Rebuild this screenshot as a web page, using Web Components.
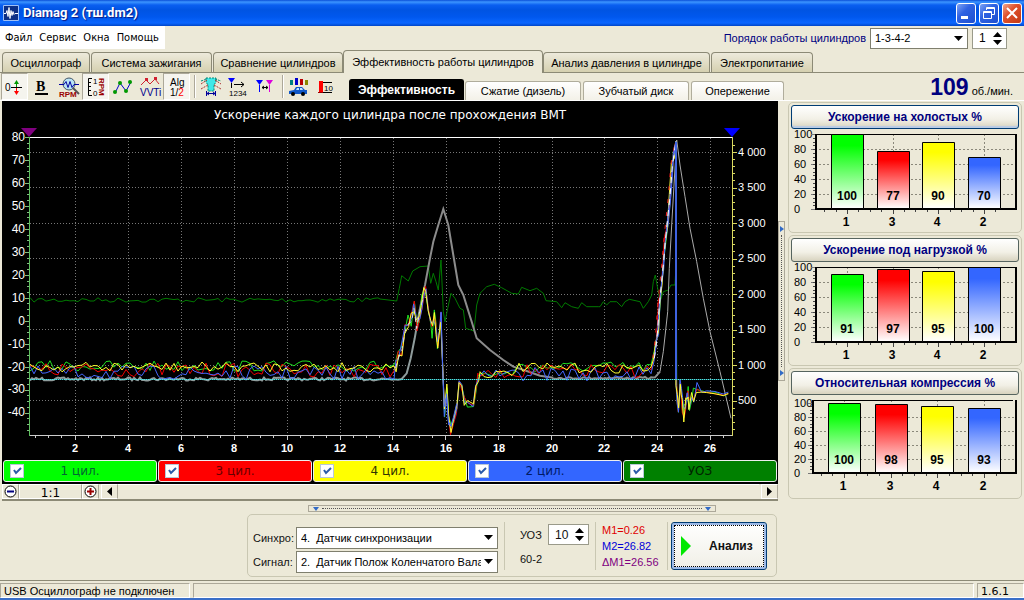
<!DOCTYPE html>
<html lang="ru">
<head>
<meta charset="utf-8">
<title>Diamag 2</title>
<style>
html,body{margin:0;height:100%}
body{font:11px/16px "Liberation Sans",Arial,sans-serif;color:#000;background:#ece9d8}
</style>
</head>
<body>
<dm-app></dm-app>
<script>
const define=(name,html,init)=>customElements.define(name,class extends HTMLElement{
  connectedCallback(){
    if(this.shadowRoot)return;
    const root=this.attachShadow({mode:'open'});
    root.innerHTML='<style>*{box-sizing:border-box}button,input,select{font:inherit;color:inherit;margin:0}</style>'+(typeof html==='function'?html(this):html);
    if(init)init(this,root);
  }
});

/* Title bar */
define('dm-titlebar',`<style>
:host{display:flex;align-items:center;height:26px;padding:0 2px 0 3px;gap:4px;color:#fff;
 background:linear-gradient(#0a4fd8 0,#3c95ff 2px,#0a5ff0 5px,#0054e3 10px,#0058ee 17px,#0a66ff 23px,#0046c8 26px)}
h1{flex:1;margin:0;font:bold 13px/20px Roboto,sans-serif;text-shadow:1px 1px 1px #0a1883}
button{width:20px;height:21px;padding:0;border:1px solid #fff;border-radius:3px;background:linear-gradient(135deg,#7fa4f5,#2f62e2 40%,#1d4fd0);display:flex;align-items:center;justify-content:center}
button.close{background:linear-gradient(135deg,#f0a58c,#e0512c 40%,#c23a14)}
nav{display:flex;gap:3px}
</style>
<svg width="16" height="16" viewBox="0 0 16 16"><path fill="#0c2f86" stroke="#9fc0f5" d="M.5.5h15v15H.5z"/><path fill="none" stroke="#fff" d="M1 8.500h2l1-3 1 6 1-9 1 11 1-8 1 5 1-4 1 3 1-1h3"/></svg>
<h1>Diamag 2 (тш.dm2)</h1>
<nav>
<button aria-label="Свернуть"><svg width="14" height="14"><path fill="#fff" d="M2 10h7v3H2z"/></svg></button>
<button aria-label="Восстановить"><svg width="14" height="14" fill="none" stroke="#fff"><path d="M4.500 4V1.500h8v7H10M4.500 2.500h8M1.500 5.500h8v7h-8zM1.500 6.500h8"/></svg></button>
<button class="close" aria-label="Закрыть"><svg width="14" height="14"><path stroke="#fff" stroke-width="2" d="M2 2l10 10M12 2L2 12"/></svg></button>
</nav>`);

/* Drop-down; the chosen option is passed through the "value" attribute */
define('dm-select',el=>`<style>
:host{display:block}
span{display:grid;align-items:center;height:100%}
select,svg{grid-area:1/1}
select{appearance:none;width:100%;height:100%;border:1px solid #7f7f6e;border-radius:0;background:#fff;padding:0 16px 0 4px;outline:0;white-space:pre}
svg{justify-self:end;margin-right:5px;pointer-events:none}
</style><span><select aria-label="${el.getAttribute('label')}"><option>${el.getAttribute('value')}</option></select><svg width="9" height="5"><path d="M0 0h9L4.500 5z"/></svg></span>`);

define('dm-spin',el=>`<style>
:host{display:flex;border:1px solid #9a9a8a;background:#fff;font-size:12px}
input{flex:1;min-width:0;border:0;padding:0 0 0 6px;background:none;outline:0}
div{display:flex;flex-direction:column;justify-content:center;gap:3px;padding-right:4px}
button{border:0;padding:0;background:none;display:flex}
</style><input aria-label="${el.getAttribute('label')}" value="${el.getAttribute('value')}">
<div><button aria-label="Больше"><svg width="9" height="5"><path d="M0 5h9L4.500 0z"/></svg></button><button aria-label="Меньше"><svg width="9" height="5"><path d="M0 0h9L4.500 5z"/></svg></button></div>`);

/* Menu bar with firing order fields */
define('dm-menubar',`<style>
:host{display:flex;height:24px;justify-content:space-between}
nav{display:flex;align-items:center;gap:7px;height:23px;padding:0 6px 0 5px;background:#fff;font:11px/16px "DejaVu Sans Condensed","DejaVu Sans",sans-serif}
a{color:#000;text-decoration:none}
form{display:flex;align-items:center;gap:4px;margin-right:17px;color:#00007f}
dm-select{width:98px;height:21px;color:#000}
dm-spin{width:35px;height:21px;color:#000}
</style><nav><a href="#">Файл</a><a href="#">Сервис</a><a href="#">Окна</a><a href="#">Помощь</a></nav>
<form><span>Порядок работы цилиндров</span><dm-select label="Порядок работы цилиндров" value="1-3-4-2"></dm-select><dm-spin label="Номер цилиндра" value="1"></dm-spin></form>`);

/* Page tabs */
define('dm-tabs',`<style>
:host{display:flex;align-items:flex-end;height:23px;padding-left:2px;border-bottom:1px solid #8c8a76}
button{height:20px;padding:0;border:1px solid #8c8a76;border-bottom:0;border-radius:4px 4px 0 0;background:linear-gradient(#edeadb,#d5d0b0);margin-right:1px;white-space:nowrap;line-height:18px}
button[aria-selected=true]{height:23px;background:#ece9d8;margin:0 0 -1px -1px}
</style><button role="tab" style="width:88px">Осциллограф</button><button role="tab" style="width:121px">Система зажигания</button><button role="tab" style="width:130px">Сравнение цилиндров</button><button role="tab" aria-selected="true" style="width:200px">Эффективность работы цилиндров</button><button role="tab" style="width:167px">Анализ давления в цилиндре</button><button role="tab" style="width:102px">Электропитание</button>`);

/* Tool button: the picture is slotted */
define('dm-tool',el=>`<style>
:host{display:block;width:27px;height:27px}
button{width:100%;height:100%;padding:0;border:1px solid transparent;background:none;display:flex;align-items:center;justify-content:center}
:host([pressed]) button{border-color:#aca899 #fff #fff #aca899;background:#f5f4ee}
</style><button aria-label="${el.getAttribute('label')}" aria-pressed="${el.hasAttribute('pressed')}"><slot></slot></button>`);

define('dm-toolbar',`<style>
:host{display:flex;height:28px;align-items:flex-end;border-bottom:1px solid #fff}
.tools{display:flex;align-self:center;padding-left:1px}
i{width:2px;margin:2px 1px 2px 4px;border-left:1px solid #aca899;border-right:1px solid #fff}
svg{display:block;overflow:visible}
text{font:9px "Liberation Sans",sans-serif}
.sub{display:flex;align-items:flex-end;margin-left:10px;gap:2px}
.sub button{height:19px;padding:0;border:1px solid #b0ad9c;border-bottom:0;border-radius:3px 3px 0 0;background:linear-gradient(#fff,#f3f1e8)}
.sub button[aria-selected=true]{height:21px;background:#000;border-color:#000;color:#fff;font-weight:bold;font-size:12px;margin-right:-1px}
output{flex:1;display:flex;justify-content:flex-end;align-items:baseline;gap:3px;margin-right:11px;align-self:center}
output b{font-size:23px;line-height:26px;color:#00007f}
</style>
<div class="tools">
<dm-tool pressed label="Ноль"><svg width="20" height="20"><text x="0" y="14" style="font-size:10px">0</text><path stroke="#000" d="M6 10.500h11"/><path fill="#090" d="M9 7h5l-2.500-4zM11 7h1v3h-1z"/><path fill="#f00" d="M9 14h5l-2.500 4zM11 11h1v3h-1z"/></svg></dm-tool>
<dm-tool label="Жирные линии"><svg width="20" height="20"><text x="4" y="14" style="font:bold 14px 'Liberation Serif',serif">B</text><path stroke="#000" stroke-width="2" d="M3 17h13"/></svg></dm-tool>
<dm-tool label="RPM"><svg width="20" height="20"><circle cx="10" cy="7" r="6" fill="#b9e4f5" stroke="#456"/><path d="M14 11l6 6" stroke="#555" stroke-width="2"/><path fill="none" stroke="#0000a0" d="M0 7.500h5l2-3 2 6 2-6 2 6 2-3h5"/><text x="0" y="20" style="font:bold 8px 'Liberation Sans'" fill="#900">RPM</text></svg></dm-tool>
<dm-tool pressed label="Шкала оборотов"><svg width="20" height="20"><path fill="none" stroke="#000" d="M6 1.500H2.500v17H6M2 5.500h3M2 9.500h3M2 13.500h3"/><text x="7" y="7" style="font-size:8px">1</text><text x="7" y="19" style="font-size:8px">0</text><text transform="translate(13 1) rotate(90)" style="font:bold 8px 'Liberation Sans'" fill="#900">RPM</text></svg></dm-tool>
<dm-tool label="Точки"><svg width="20" height="20"><path fill="none" stroke="#00c" d="M2 16L7 6l6 8 5-9"/><g fill="#090"><circle cx="2" cy="15" r="2"/><circle cx="7" cy="6" r="2"/><circle cx="13" cy="14" r="2"/><circle cx="17" cy="5" r="2"/></g></svg></dm-tool>
<dm-tool label="VVTi"><svg width="20" height="20"><path fill="none" stroke="#d02030" d="M1 8l5-5 4 4 5-5 4 5"/><path fill="#d02030" d="M5 1h3v3H5zM14 0h3v3h-3z"/><text x="0" y="19" style="font-size:10px" fill="#00008b">VVTi</text></svg></dm-tool>
<dm-tool pressed label="Алгоритм"><svg width="20" height="20"><text x="3" y="9" style="font-size:10px">Alg</text><text x="3" y="19" style="font-size:10px">1/<tspan fill="#f00">2</tspan></text></svg></dm-tool>
<i></i>
<dm-tool label="Интервал"><svg width="20" height="20"><path fill="#40e8e8" stroke="#087" stroke-dasharray="2 1" d="M5 1h10v4l-2 3v6H7V8L5 5z"/><path fill="none" stroke="#a33" stroke-dasharray="2 1" d="M0 7l6-4M14 3l6 4M0 12l7-4M13 8l7 4"/><path fill="none" stroke="#087" stroke-dasharray="2 1" d="M0 4l6-2M14 2l6 2"/><path fill="none" stroke="#009" d="M5.500 14v5M14.500 14v5M6 16.500h8M8 15l-2 1.500L8 18M12 15l2 1.500-2 1.500"/></svg></dm-tool>
<dm-tool label="Метки 1234"><svg width="20" height="20"><path fill="#00f" d="M0 1h7L3.500 6z"/><path fill="none" stroke="#000" d="M3.500 6v5M6 7.500h10M13 5l3 2.500-3 2.500"/><text x="1" y="19" style="font-size:8px">1234</text></svg></dm-tool>
<dm-tool label="Маркеры"><svg width="20" height="20"><path fill="#00f" d="M1 3h7L4.500 8z"/><path fill="#d0d" d="M11 3h7l-3.500 5z"/><path fill="none" stroke="#00f" d="M4.500 8v7"/><path fill="none" stroke="#d0d" d="M14.500 8v7"/><path fill="none" stroke="#000" d="M7 10.500h6M9 9l-2 1.500L9 12M11 9l2 1.500-2 1.500"/></svg></dm-tool>
<i></i>
<dm-tool label="Автомобиль"><svg width="20" height="20"><path fill="#008080" d="M1 3h3v5H1z"/><path fill="#00c" d="M6 1h3v7H6z"/><path fill="#b00" d="M11 2h3v6h-3z"/><path fill="#880" d="M16 3h3v5h-3z"/><path fill="#1158c8" d="M0 14l5-1 2-3h6l3 3h2v4H0z"/><path fill="#bfe4ff" d="M7 13l1-2h2v2zM11 11h2l1 2h-3z"/><circle cx="4" cy="17" r="2"/><circle cx="14" cy="17" r="2"/></svg></dm-tool>
<dm-tool label="Столбцы"><svg width="20" height="20"><path fill="#f00" d="M3 4h4v11H3z"/><path stroke="#900" d="M2 15.500h5"/><text x="8" y="14" style="font-size:8px">10</text><path stroke="#000" d="M7 5.500h9M7 15.500h9"/></svg></dm-tool>
</div>
<div class="sub"><button role="tab" aria-selected="true" style="width:115px">Эффективность</button><button role="tab" style="width:116px">Сжатие (дизель)</button><button role="tab" style="width:106px">Зубчатый диск</button><button role="tab" style="width:93px">Опережение</button></div>
<output><b>109</b><span>об./мин.</span></output>`);

/* Oscillogram */
define('dm-chart',`<style>
:host{display:block;background:#000}
svg{display:block;width:100%;height:auto}
text{fill:#fff;font:bold 11px "Liberation Sans",sans-serif}
.l text{font-weight:normal;font-size:12px;text-anchor:end}
.b text{text-anchor:middle}
.r text{font-weight:normal}
text.t{font:12px "DejaVu Sans",sans-serif;text-anchor:middle}
</style><svg viewBox="2 101 776 359" role="img" aria-label="Ускорение каждого цилиндра"></svg>`,(el,root)=>{
  let seed=7;
  const rnd=()=>(seed=(seed*16807)%2147483647)/2147483647-.5;
  const noise=(x0,x1,step,y,amp)=>{const p=[];for(let x=x0;x<x1;x+=step)p.push([x,y+rnd()*amp]);return p};
  const line=(p,c,w=1,extra='')=>`<polyline fill="none" stroke="${c}" stroke-width="${w}" ${extra} points="${p.map(q=>q[0].toFixed(1)+','+q[1].toFixed(1)).join(' ')}"/>`;
  const at=(ox,list)=>list.map(q=>[ox+q[0]/3,125+q[1]/3]);
  let s='<text class="t" x="390" y="119">Ускорение каждого цилиндра после прохождения ВМТ</text>';
  const xs=[75,128,181,234,287,340,393,446,499,552,604,657,710],ys=[152,187,223,258,294,329,365,400];
  s+='<g stroke="#777" stroke-dasharray="1 2">'+xs.map(x=>`<path d="M${x+.5} 138v298"/>`).join('')+ys.map(y=>`<path d="M30 ${y+.5}h702"/>`).join('')+'</g>';
  s+='<g class="l">';
  for(let i=0;i<13;i++)s+=`<text x="25" y="${Math.round(141+i*22.95)}">${80-i*10}</text>`;
  s+='</g><g class="r">'+ys.map((y,i)=>{const v=4000-i*500;return `<text x="738" y="${y+4}">${v>=1000?Math.floor(v/1000)+' '+String(v%1000).padStart(3,'0'):v}</text>`}).join('')+'</g>';
  s+='<g class="b">'+xs.map((x,i)=>`<text x="${x}" y="452">${2+i*2}</text>`).join('')+'</g>';
  s+='<path stroke="#fff" d="M29 137.500h704"/><path stroke="#ccc" d="M29 435.500h704"/><path stroke="#5fbf5f" d="M29.500 137v299"/><path stroke="#d8d860" d="M732.500 137v299"/>';
  let d='';for(let i=0;i<52;i++)d+=`M${i%4?27:25} ${Math.round(137+i*5.74)+.5}h${i%4?2:4}`;
  s+=`<path stroke="#7fbf7f" d="${d}"/>`;
  d='';for(let i=-1;i<40;i++)d+=`M733 ${Math.round(152+i*7.1)+.5}h${i%5?2:4}`;
  s+=`<path stroke="#d8d860" d="${d}"/>`;
  d='';for(let i=0;i<53;i++)d+=`M${Math.round(35+i*13.24)+.5} 436v${i%4==3?4:2}`;
  s+=`<path stroke="#ccc" d="${d}"/>`;
  s+='<path fill="#800080" d="M21 128h16l-8 9z"/><path fill="#00f" d="M724 128h16l-8 9z"/>';
  s+=line([...noise(30,380,4,300,5),...at(380,[[0,522],[50,528],[58,490],[65,452],[85,468],[98,438],[120,425],[145,423],[152,475],[160,445],[168,470],[175,495],[183,405],[190,560],[195,590],[203,550],[213,505],[225,520],[240,550],[250,555],[257,610],[282,618],[290,540],[300,505],[320,485],[343,478],[365,488],[395,505],[415,507],[425,487],[450,497],[470,490],[490,505],[498,527],[530,530],[545,548],[555,533],[575,545],[595,550],[605,533],[620,545],[655,545]]),...at(600,[[0,545],[10,530],[20,540],[30,530],[50,530],[65,545],[75,530],[88,523],[120,530],[130,550],[145,530],[155,510],[160,470],[166,450],[180,530],[190,500],[205,495],[213,480],[225,480],[228,420]])],'#007a00');
  s+=line([...noise(30,400,2,379,3),...at(380,[[65,762],[80,745],[92,700],[104,640],[118,560]])],'#8f9c9c',2);
  s+=line(at(380,[[118,560],[135,480],[150,400],[160,350],[175,300],[190,252],[205,300],[220,390],[235,480],[250,510],[275,590],[290,640],[330,675],[370,705],[400,725],[440,738],[480,752],[520,758]]),'#8c8c8c',2);
  s+=line([...noise(553,655,2,378,2),...at(600,[[165,757],[180,740]])],'#8c8c8c',2);
  s+=line(at(600,[[180,740],[190,680],[203,560],[208,430],[215,300],[222,180],[230,45],[240,120],[255,215],[270,310],[290,410],[310,520],[330,620],[360,740],[393,880]]),'#aaa');
  const rise=[[47,730],[55,705],[65,675],[75,615],[85,595],[95,585],[102,555],[110,605],[118,570],[125,535],[131,515],[137,512],[145,565],[152,585],[157,620],[162,565],[168,605],[173,650],[178,605],[183,575],[188,730],[193,850],[200,800],[205,880],[212,912],[220,880],[230,850],[237,760],[245,790],[253,830],[262,835],[280,832],[287,790],[295,752]];
  const peak=[[163,700],[168,665],[173,615],[178,540],[184,480],[190,420],[196,350],[202,290],[210,215],[217,125],[222,88],[228,48],[229,760],[232,820],[236,860],[240,790],[244,815],[248,840],[252,865],[256,840],[260,820],[264,810],[268,830],[274,815],[280,805],[290,790]];
  const tail=[[305,802],[320,800],[345,803],[370,808],[385,806]];
  const jitter=(list,a,dx=0)=>list.map(q=>[q[0]+rnd()*dx,q[1]+rnd()*a]);
  for(const [c,y,a] of [['#20e020',366,11],['#f00000',370,14],['#4468ff',373,14],['#ffff30',367,10]]){
    s+=line([...noise(30,396,4,y,a),...at(380,jitter(rise.slice(0,24),56,3)),...at(380,jitter(rise.slice(24),36,3)),...noise(480,515,4,374,8),...noise(515,652,4,y+1,a),...at(600,jitter(peak.slice(0,11),40,6)),...at(600,peak.slice(11,12)),...at(600,jitter(peak.slice(12),56,3)),...at(600,jitter(tail,10))],c);
  }
  s+=line(at(380,jitter(rise.slice(0,12),12)),'#ddd',1,'stroke-dasharray="5 4"')+line(at(600,peak.slice(0,12)),'#4a6cff')+line(at(600,peak.slice(0,12)),'#fff',1,'stroke-dasharray="6 5"')+line(at(600,peak.slice(0,11).map(q=>[q[0]-5,q[1]])),'#f02020',1,'stroke-dasharray="4 9"');
  s+=line(at(380,jitter(rise.slice(19,27),30)),'#4a6cff')+line([[676,142],[676,379]],'#3f63e0',2);
  s+='<path stroke="#5ff0e8" stroke-dasharray="1 1" d="M30 379.500h702"/><path stroke="#3fd8e0" stroke-opacity=".45" d="M30 379.500h702"/>';
  root.querySelector('svg').innerHTML=s;
});

/* Channel switch under the chart */
define('dm-channel',el=>`<style>
:host{display:block;flex:1;min-width:0}
label{display:grid;grid-template-columns:14px 1fr 14px;align-items:center;height:22px;padding:0 7px;border:1px solid #eee;border-radius:3px;background:${el.getAttribute('color')};font:12px/20px "DejaVu Sans",sans-serif;color:${el.getAttribute('ink')}}
input{appearance:none;width:12px;height:12px;background:#fff;grid-area:1/1;outline:1px solid #b8c8d8}
svg{grid-area:1/1;pointer-events:none}
span{text-align:center;grid-area:1/2}
</style><label><input type="checkbox" checked><svg width="12" height="12"><path fill="none" stroke="#2a5aa8" stroke-width="2" d="M3 5l2 3 5-5"/></svg><span><slot></slot></span></label>`);

define('dm-scroll',`<style>
:host{display:flex;height:17px;border-bottom:2px solid #8c8a76;background:#ece9d8}
button,output{border:1px solid;border-color:#fff #aca899 #fff #fff;padding:0;background:#ece9d8;display:flex;align-items:center;justify-content:center}
.z{width:17px}
output{width:63px;padding-top:3px;font:12px/13px "DejaVu Sans",sans-serif}
.a{width:17px;margin-left:2px}
div{flex:1;border-top:1px solid #fff;background:#ece9d8}
</style>
<button class="z" aria-label="Уменьшить"><svg width="13" height="13"><circle cx="6.500" cy="6.500" r="5.500" fill="#fff" stroke="#000"/><path stroke="#00007f" stroke-width="2" d="M3 6.500h7"/></svg></button>
<output>1:1</output>
<button class="z" aria-label="Увеличить"><svg width="13" height="13"><circle cx="6.500" cy="6.500" r="5.500" fill="#fff" stroke="#000"/><path stroke="#900" stroke-width="2" d="M3 6.500h7M6.500 3v7"/></svg></button>
<button class="a" aria-label="Влево"><svg width="5" height="9"><path d="M5 0v9L0 4.500z"/></svg></button><div></div><button class="a" aria-label="Вправо"><svg width="5" height="9"><path d="M0 0v9l5-4.500z"/></svg></button>`);

/* Gradient bar chart with a header button */
define('dm-bars',`<style>
:host{display:block;border:1px solid #c9c7b2;border-radius:5px;padding:2px;height:131px}
button{display:block;width:100%;height:24px;padding:0;border:1px solid #56645f;border-radius:3px;background:linear-gradient(#fff,#f2f0e6 60%,#d8d3bf);color:#00007f;font-weight:bold;font-size:12px}
:host([active]) button{border-color:#003c74;box-shadow:inset 0 -2px 1px #b8cbe6}
svg{display:block;width:100%;height:auto}
text{font:11px "Liberation Sans",sans-serif}
.v text{font:bold 12px "Liberation Sans",sans-serif;text-anchor:middle}
</style><button><slot></slot></button><svg viewBox="0 0 228 101"></svg>`,(el,root)=>{
  const max=+el.getAttribute('max'),left=+el.getAttribute('left');
  const bars=el.getAttribute('values').split(',').map(Number);
  const cols=['#00ff00','#ff0000','#ffff00','#3366ff'],names=['1','3','4','2'];
  const x0=+el.getAttribute('start'),step=(177-x0)/3;
  const top=5,bot=+el.getAttribute('bottom'),h=bot-top,Y=v=>Math.round(bot-v*h/max);
  let s='<defs>'+cols.map((c,i)=>`<linearGradient id="g${i}" x1="0" y1="0" x2="0" y2="1"><stop offset=".15" stop-color="${c}"/><stop offset="1" stop-color="#fff"/></linearGradient>`).join('')+'</defs><g stroke="#8a887a" stroke-dasharray="2 2">';
  for(let v=20;v<=80;v+=20)s+=`<path d="M${left} ${Y(v)+.5}H225"/>`;
  bars.forEach((b,i)=>{s+=`<path d="M${Math.round(x0+i*step)+16.5} ${top}V${bot}"/>`});
  s+='</g>';
  for(let v=0;v<=100;v+=20)s+=`<text x="3" y="${Y(v)+4}">${v}</text><path stroke="#777" d="M${left-4} ${Y(v)+.5}h4"/>`;
  let d='';for(let v=5;v<100;v+=5)d+=`M${left-2} ${Y(v)+.5}h2`;
  bars.forEach((b,i)=>{for(let k=-2;k<2;k++)d+=`M${Math.round(x0+i*step+16+k*step/4)+.5} ${bot+1}v${k?2:4}`});
  s+=`<path stroke="#444" d="${d}"/><path fill="none" stroke="#000" d="M${left} ${top+.5}h201"/><path fill="none" stroke="#000" stroke-width="2" d="M${left+1} ${top}V${bot}M225 ${top}v${h}M${left} ${bot}H226"/><g class="v">`;
  bars.forEach((b,i)=>{const x=Math.round(x0+i*step);s+=`<path fill="url(#g${i})" stroke="#000" d="M${x+.5} ${Y(b)+.5}h32V${bot-.5}h-32z"/><text x="${x+16}" y="${bot-9}">${b}</text><text x="${x+15}" y="${bot+17}">${names[i]}</text>`});
  root.querySelector('svg').innerHTML=s+'</g>';
});

/* Collapsible splitter handles */
define('dm-split',el=>el.hasAttribute('vertical')?`<style>
:host{display:flex;align-items:center}
div{width:7px;height:160px;border:1px solid #aca899;display:flex;flex-direction:column;align-items:center;justify-content:space-between;padding:4px 0}
i{flex:1;margin:3px 0;border-left:1px dotted #555}
</style><div><svg width="4" height="6"><path fill="#316ac5" d="M0 0v6l4-3z"/></svg><i></i><svg width="4" height="6"><path fill="#316ac5" d="M0 0v6l4-3z"/></svg></div>`:`<style>
:host{display:flex;width:408px;height:7px;border:1px solid #aca899;align-items:center;padding:0 4px}
i{flex:1;margin:0 3px;border-top:1px dotted #555}
</style><svg width="6" height="4"><path fill="#316ac5" d="M0 0h6L3 4z"/></svg><i></i><svg width="6" height="4"><path fill="#316ac5" d="M0 0h6L3 4z"/></svg>`);

define('dm-controls',`<style>
:host{display:flex;align-items:center;width:530px;height:63px;border:1px solid #c9c7b2;border-radius:5px;padding:0 9px 0 5px;color:#111}
.src{display:grid;grid-template-columns:40px 202px;gap:2px 3px;align-items:center;padding-top:8px}
.src dm-select{height:22px;color:#000}
hr{width:1px;height:48px;border:0;margin:0 6px;background:#c9c7b2}
.adv{display:grid;grid-template-columns:28px 41px;gap:6px 0;align-items:center;margin-left:9px}
.adv dm-spin{height:21px}
ul{list-style:none;margin:0;padding:0;width:60px;white-space:nowrap}
button{width:97px;height:48px;display:flex;align-items:center;gap:18px;padding:0 9px;border:1px solid #003c74;border-radius:3px;background:linear-gradient(#fff,#f0efe6);font-weight:bold;font-size:12px;box-shadow:inset 0 0 0 2px #9ebbe8;outline:1px dotted #000;outline-offset:-4px;margin-left:-3px}
</style>
<div class="src"><span>Синхро:</span><dm-select label="Синхро" value="4.&nbsp; Датчик синхронизации"></dm-select><span>Сигнал:</span><dm-select label="Сигнал" value="2.&nbsp; Датчик Полож Коленчатого Вала"></dm-select></div>
<hr><div class="adv"><span>УОЗ</span><dm-spin label="УОЗ" value="10"></dm-spin><span>60-2</span></div><hr>
<ul><li style="color:#e00000">M1=0.26</li><li style="color:#0000d8">M2=26.82</li><li style="color:#800080">ΔM1=26.56</li></ul><hr>
<button><svg width="10" height="20"><path fill="#00e800" d="M0 0l10 10L0 20z"/></svg>Анализ</button>`);

define('dm-status',`<style>
:host{display:flex;height:20px;gap:3px;border-top:1px solid #8c8a76;border-bottom:2px solid #3a6fc8;padding:2px 0 0 0}
span{border:1px solid;border-color:#aca899 #fff #fff #aca899;padding:0 3px;line-height:15px;white-space:nowrap}
</style><span style="width:190px">USB Осциллограф не подключен</span><span style="flex:1"></span><span style="width:47px;font:11px/15px 'DejaVu Sans',sans-serif">1.6.1</span>`);

define('dm-app',`<style>
:host{display:flex;flex-direction:column;min-height:100vh;background:#ece9d8}
main{display:grid;grid-template-columns:minmax(0,1fr) 9px 236px;padding:0 1px 0 2px}
.legend{display:flex;gap:1px;background:#000;padding:0 1px 2px}
aside{display:flex;flex-direction:column;gap:2px;padding:1px 1px 0 1px}
footer{flex:1;display:flex;flex-direction:column;align-items:center;gap:2px;padding-top:4px}
</style>
<dm-titlebar></dm-titlebar><dm-menubar></dm-menubar><dm-tabs></dm-tabs><dm-toolbar></dm-toolbar>
<main><section><dm-chart></dm-chart>
<div class="legend"><dm-channel color="#00ff00" ink="#063">1 цил.</dm-channel><dm-channel color="#ff0000" ink="#600">3 цил.</dm-channel><dm-channel color="#ffff00" ink="#330">4 цил.</dm-channel><dm-channel color="#3366ff" ink="#001a66">2 цил.</dm-channel><dm-channel color="#008000" ink="#020">УОЗ</dm-channel></div>
<dm-scroll></dm-scroll></section>
<dm-split vertical></dm-split>
<aside><dm-bars active max="100" left="24" start="40" bottom="80" values="100,77,90,70">Ускорение на холостых %</dm-bars>
<dm-bars max="100" left="24" start="40" bottom="80" values="91,97,95,100">Ускорение под нагрузкой %</dm-bars>
<dm-bars max="104" left="21" start="37" bottom="78" values="100,98,95,93">Относительная компрессия %</dm-bars></aside></main>
<footer><dm-split></dm-split><dm-controls></dm-controls></footer>
<dm-status></dm-status>`);
</script>
</body>
</html>
